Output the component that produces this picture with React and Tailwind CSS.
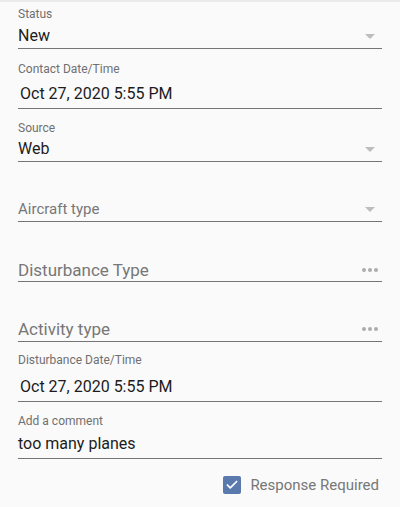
import { Check } from "lucide-react";

function Arrow() {
  return (
    <svg width="10" height="5" viewBox="0 0 10 5" className="mr-[7px] shrink-0">
      <path d="M0 0h10L5 5z" fill="#bdbdbd" />
    </svg>
  );
}

function Dots() {
  return (
    <div className="mr-[4px] flex shrink-0 gap-[2px]">
      <span className="h-[4px] w-[4px] rounded-full bg-[#acacac]" />
      <span className="h-[4px] w-[4px] rounded-full bg-[#acacac]" />
      <span className="h-[4px] w-[4px] rounded-full bg-[#acacac]" />
    </div>
  );
}

function Field({ label, value, placeholder, icon, box, gap, valueClass }) {
  return (
    <div className={`flex flex-col border-b border-[#757575] ${box}`}>
      {label && (
        <div className="text-[12px] leading-[14px] text-[#707070]">{label}</div>
      )}
      <div className={`flex h-[20px] items-center justify-between ${gap}`}>
        <span
          className={`leading-[20px] ${
            value ? "text-[#1c1c1c]" : "text-[#777777]"
          } ${valueClass}`}
        >
          {value || placeholder}
        </span>
        {icon}
      </div>
    </div>
  );
}

export default function App() {
  return (
    <div className="min-h-screen bg-[#fafafa] font-['Roboto',sans-serif]">
      <div className="h-[2px] bg-[#ebebeb]" />
      <div className="px-[18px]">
        <Field
          label="Status"
          value="New"
          icon={<Arrow />}
          box="pt-[5px] pb-[2px]"
          gap="mt-[5px]"
          valueClass="text-[16px]"
        />
        <Field
          label="Contact Date/Time"
          value="Oct 27, 2020 5:55 PM"
          box="pt-[13px] pb-[4px]"
          gap="mt-[8px]"
          valueClass="pl-[2px] text-[16px]"
        />
        <Field
          label="Source"
          value="Web"
          icon={<Arrow />}
          box="pt-[12px] pb-[2px]"
          gap="mt-[4px]"
          valueClass="text-[16px]"
        />
        <Field
          placeholder="Aircraft type"
          icon={<Arrow />}
          box="pt-[37px] pb-[2px]"
          gap=""
          valueClass="text-[15px]"
        />
        <Field
          placeholder="Disturbance Type"
          icon={<Dots />}
          box="pt-[38px] pb-[1px]"
          gap=""
          valueClass="text-[17px]"
        />
        <Field
          placeholder="Activity type"
          icon={<Dots />}
          box="pt-[37px] pb-[2px]"
          gap=""
          valueClass="text-[17px]"
        />
        <Field
          label="Disturbance Date/Time"
          value="Oct 27, 2020 5:55 PM"
          box="pt-[11px] pb-[4px]"
          gap="mt-[10px]"
          valueClass="pl-[2px] text-[16px]"
        />
        <Field
          label="Add a comment"
          value="too many planes"
          box="pt-[12px] pb-[4px]"
          gap="mt-[6px]"
          valueClass="text-[16px]"
        />
        <div className="mt-[17px] flex items-center justify-end gap-[9px] pr-[3px]">
          <div className="flex h-[18px] w-[18px] items-center justify-center rounded-[2px] bg-[#5a79ac]">
            <Check size={14} strokeWidth={3} color="#ffffff" />
          </div>
          <span className="text-[15px] leading-[18px] text-[#777777]">Response Required</span>
        </div>
      </div>
    </div>
  );
}
